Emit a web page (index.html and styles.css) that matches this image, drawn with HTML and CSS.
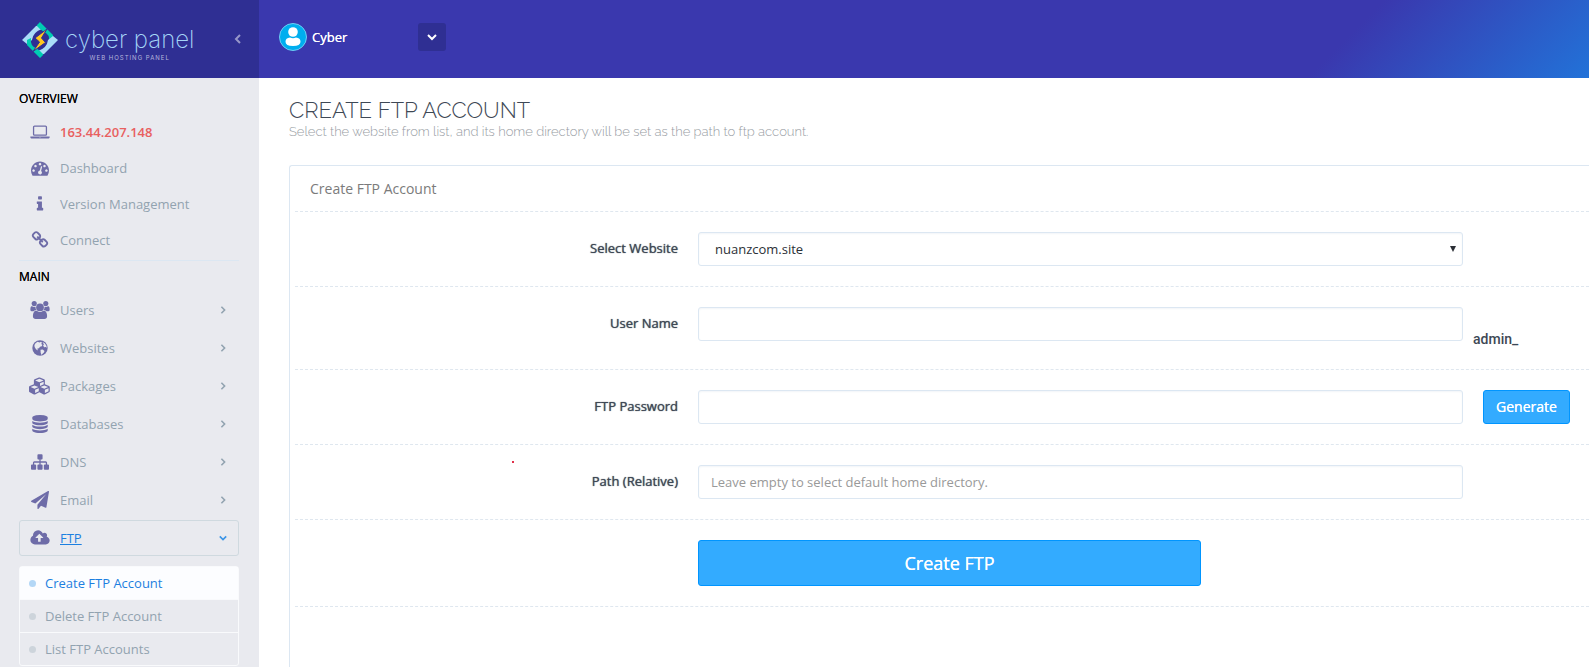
FILE: index.html
```html
<!DOCTYPE html>
<html lang="en">

<head>
    <meta charset="UTF-8">
    <meta name="viewport" content="width=device-width, initial-scale=1.0">
    <title>Create FTP Account - CyberPanel</title>
    <link rel="stylesheet" href="styles.css">
</head>

<body>
    <aside class="sidebar">
        <div class="brand">
            <a class="logo" href="#">
                <svg class="logo-mark" viewBox="0 0 36 36">
                    <path fill="#aadcf8" d="M0 18L14 4h4l2 3q-9 3-10 11l-5 4z" />
                    <path fill="#00cdb3" d="M14.500 3.500L18 0l13 13v5l-4 2q1-8-5-10l-4-3z" />
                    <path fill="#aadcf8" d="M36 18L22 32h-4l-2-3q9-3 10-11l5-4z" />
                    <path fill="#00cdb3" d="M21.500 32.500L18 36 5 23v-5l4-2q-1 8 5 10l4 3z" />
                    <path fill="#ffc81e" stroke="#2f2f93" stroke-width="1" d="M25 7L13 16l4.500 4L11 29.500 23.500 20.500l-4-4.500z" />
                </svg>
                <span class="logo-text">
                    <span class="logo-name">cyber panel</span>
                    <span class="logo-sub">WEB HOSTING PANEL</span>
                </span>
            </a>
            <button class="collapse" type="button" aria-label="Collapse menu">
                <svg viewBox="0 0 8 12"><path d="M6 2L2 6l4 4" /></svg>
            </button>
        </div>

        <nav class="menu">
            <h2 class="menu-title">OVERVIEW</h2>
            <ul class="menu-list overview">
                <li><a class="menu-link server-ip" href="#">
                    <svg class="icon laptop" viewBox="0 0 1920 1792"><path d="M416 1280q-66 0-113-47t-47-113v-704q0-66 47-113t113-47h1088q66 0 113 47t47 113v704q0 66-47 113t-113 47h-1088zm-32-864v704q0 13 9.5 22.5t22.5 9.5h1088q13 0 22.5-9.5t9.5-22.5v-704q0-13-9.5-22.5t-22.5-9.5h-1088q-13 0-22.5 9.5t-9.5 22.5zm1376 928h160v96q0 40-47 68t-113 28h-1600q-66 0-113-28t-47-68v-96h1760zm-720 96q16 0 16-16t-16-16h-160q-16 0-16 16t16 16h160z" /></svg>
                    <span>163.44.207.148</span></a></li>
                <li><a class="menu-link" href="#">
                    <svg class="icon" viewBox="0 0 1792 1792"><path d="M384 1152q0-53-37.5-90.5t-90.5-37.5-90.5 37.5-37.5 90.5 37.5 90.5 90.5 37.5 90.5-37.5 37.5-90.5zm192-448q0-53-37.5-90.5t-90.5-37.5-90.5 37.5-37.5 90.5 37.5 90.5 90.5 37.5 90.5-37.5 37.5-90.5zm428 481l101-382q6-26-7.5-48.5t-38.5-29.5-48 6.5-30 39.5l-101 382q-60 5-107 43.5t-63 98.5q-20 77 20 146t117 89 146-20 89-117q16-60-6-117t-72-91zm660-33q0-53-37.5-90.5t-90.5-37.5-90.5 37.5-37.5 90.5 37.5 90.5 90.5 37.5 90.5-37.5 37.5-90.5zm-640-640q0-53-37.5-90.5t-90.5-37.5-90.5 37.5-37.5 90.5 37.5 90.5 90.5 37.5 90.5-37.5 37.5-90.5zm448 192q0-53-37.5-90.5t-90.5-37.5-90.5 37.5-37.5 90.5 37.5 90.5 90.5 37.5 90.5-37.5 37.5-90.5zm320 448q0 261-141 483-19 29-54 29h-1402q-35 0-54-29-141-221-141-483 0-182 71-348t191-286 286-191 348-71 348 71 286 191 191 286 71 348z" /></svg>
                    <span>Dashboard</span></a></li>
                <li><a class="menu-link" href="#">
                    <svg class="icon" viewBox="0 0 1792 1792"><path d="M1216 1344v128q0 26-19 45t-45 19h-512q-26 0-45-19t-19-45v-128q0-26 19-45t45-19h64v-384h-64q-26 0-45-19t-19-45v-128q0-26 19-45t45-19h384q26 0 45 19t19 45v576h64q26 0 45 19t19 45zm-128-1152v192q0 26-19 45t-45 19h-256q-26 0-45-19t-19-45v-192q0-26 19-45t45-19h256q26 0 45 19t19 45z" /></svg>
                    <span>Version Management</span></a></li>
                <li><a class="menu-link" href="#">
                    <svg class="icon" viewBox="0 0 1792 1792"><path d="M1520 1216q0-40-28-68l-208-208q-28-28-68-28-42 0-72 32 3 3 19 18.5t21.5 21.5 15 19 13 25.5 3.5 27.5q0 40-28 68t-68 28q-15 0-27.5-3.5t-25.5-13-19-15-21.5-21.5-18.5-19q-33 31-33 73 0 40 28 68l206 207q27 27 68 27 40 0 68-26l147-146q28-28 28-67zm-703-705q0-40-28-68l-206-207q-28-28-68-28-39 0-68 27l-147 146q-28 28-28 67 0 40 28 68l208 208q27 27 68 27 42 0 72-31-3-3-19-18.5t-21.5-21.5-15-19-13-25.5-3.5-27.5q0-40 28-68t68-28q15 0 27.5 3.5t25.5 13 19 15 21.5 21.5 18.5 19q33-31 33-73zm895 705q0 120-85 203l-147 146q-83 83-203 83-121 0-204-85l-206-207q-83-83-83-203 0-123 88-209l-88-88q-86 88-208 88-120 0-204-84l-208-208q-84-84-84-204t85-203l147-146q83-83 203-83 121 0 204 85l206 207q83 83 83 203 0 123-88 209l88 88q86-88 208-88 120 0 204 84l208 208q84 84 84 204z" /></svg>
                    <span>Connect</span></a></li>
            </ul>

            <h2 class="menu-title divided">MAIN</h2>
            <ul class="menu-list main">
                <li><a class="menu-link" href="#">
                    <svg class="icon" viewBox="0 0 1920 1792"><path d="M593 896Q431 901 328 1024H194q-82 0-138-40.5T0 865q0-353 124-353 6 0 43.5 21t97.5 42.5T384 597q67 0 133-23-5 37-5 66 0 138 81 256zM1327 896q162 5 265 128h134q82 0 138-40.5T1920 865q0-353-124-353-6 0-43.5 21t-97.5 42.5T1536 597q-67 0-133-23 5 37 5 66 0 138-81 256zM1664 1533q0 120-73 189.5t-194 69.5h-874q-121 0-194-69.5t-73-189.5q0-53 3.5-103.5t14-109 26.5-108.5 43-97.5 62-81 85.5-53.5 111.5-20q10 0 43 21.5t73 48 107 48 135 21.5 135-21.5 107-48 73-48 43-21.5q61 0 111.5 20t85.5 53.5 62 81 43 97.5 26.5 108.5 14 109 3.5 103.5z" /><circle cx="384" cy="256" r="256" /><circle cx="1536" cy="256" r="256" /><circle cx="960" cy="640" r="384" /></svg>
                    <span>Users</span><svg class="arrow" viewBox="0 0 8 10"><path d="M2 1l4 4-4 4" /></svg></a></li>
                <li><a class="menu-link" href="#">
                    <svg class="icon" viewBox="0 0 18 18"><circle cx="9" cy="9" r="7.700" /><path class="land" d="M4.500 4.200l2-1.400 2 .6 1.500-.6 1 1-.8 1.200 1.200.8-.6 1.400-1.800.6-1 1.400-1.600.4.4 1.800-1.800-1.200-1.400-2.200-.2-2zM11.500 3l2.200 1.200 1.600 2.200.6 2.400-1.200-.8-1.600.2-1-1.600.8-1.200zM9.500 10.800l2.200-.2 1.800 1.400-.6 1.600-1.600 1.400-.8 1-.8-2.200z" /></svg>
                    <span>Websites</span><svg class="arrow" viewBox="0 0 8 10"><path d="M2 1l4 4-4 4" /></svg></a></li>
                <li><a class="menu-link" href="#">
                    <svg class="icon" viewBox="0 0 2304 1792"><path d="M640 1632l384-192v-314l-384 164v342zm-64-454l404-173-404-173-404 173zm1088 454l384-192v-314l-384 164v342zm-64-454l404-173-404-173-404 173zm-448-293l384-165v-266l-384 164v267zm-64-379l441-189-441-189-441 189zm1088 518v416q0 36-19 67t-52 47l-448 224q-25 14-57 14t-57-14l-448-224q-4-2-7-4-2 2-7 4l-448 224q-25 14-57 14t-57-14l-448-224q-33-16-52-47t-19-67v-416q0-38 21.5-70t56.5-48l434-186v-400q0-38 21.5-70t56.5-48l448-192q23-10 50-10t50 10l448 192q35 16 56.5 48t21.5 70v400l434 186q36 16 57 48t21 70z" /></svg>
                    <span>Packages</span><svg class="arrow" viewBox="0 0 8 10"><path d="M2 1l4 4-4 4" /></svg></a></li>
                <li><a class="menu-link" href="#">
                    <svg class="icon" viewBox="0 0 1792 1792"><path d="M896 768q237 0 443-43t325-127v170q0 69-103 128t-280 93.5-385 34.5-385-34.5-280-93.5-103-128v-170q119 84 325 127t443 43zm0 768q237 0 443-43t325-127v170q0 69-103 128t-280 93.5-385 34.5-385-34.5-280-93.5-103-128v-170q119 84 325 127t443 43zm0-384q237 0 443-43t325-127v170q0 69-103 128t-280 93.5-385 34.5-385-34.5-280-93.5-103-128v-170q119 84 325 127t443 43zm0-1152q208 0 385 34.5t280 93.5 103 128v128q0 69-103 128t-280 93.5-385 34.5-385-34.5-280-93.5-103-128v-128q0-69 103-128t280-93.5 385-34.5z" /></svg>
                    <span>Databases</span><svg class="arrow" viewBox="0 0 8 10"><path d="M2 1l4 4-4 4" /></svg></a></li>
                <li><a class="menu-link" href="#">
                    <svg class="icon" viewBox="0 0 1792 1792"><path d="M1792 1248v320q0 40-28 68t-68 28h-320q-40 0-68-28t-28-68v-320q0-40 28-68t68-28h96v-192h-512v192h96q40 0 68 28t28 68v320q0 40-28 68t-68 28h-320q-40 0-68-28t-28-68v-320q0-40 28-68t68-28h96v-192h-512v192h96q40 0 68 28t28 68v320q0 40-28 68t-68 28h-320q-40 0-68-28t-28-68v-320q0-40 28-68t68-28h96v-192q0-52 38-90t90-38h512v-192h-96q-40 0-68-28t-28-68v-320q0-40 28-68t68-28h320q40 0 68 28t28 68v320q0 40-28 68t-68 28h-96v192h512q52 0 90 38t38 90v192h96q40 0 68 28t28 68z" /></svg>
                    <span>DNS</span><svg class="arrow" viewBox="0 0 8 10"><path d="M2 1l4 4-4 4" /></svg></a></li>
                <li><a class="menu-link" href="#">
                    <svg class="icon" viewBox="0 0 1792 1792"><path d="M1764 11q33 24 27 64l-256 1536q-5 29-32 45-14 8-31 8-11 0-24-5l-453-185-242 295q-18 23-49 23-13 0-22-4-19-7-30.5-23.5t-11.5-36.5v-349l864-1059-1069 925-395-162q-37-14-40-55-2-40 32-59l1664-960q15-9 32-9 20 0 36 11z" /></svg>
                    <span>Email</span><svg class="arrow" viewBox="0 0 8 10"><path d="M2 1l4 4-4 4" /></svg></a></li>
                <li><a class="menu-link open" href="#">
                    <svg class="icon" viewBox="0 0 1920 1792"><path d="M1280 864q0-14-9-23l-352-352q-9-9-23-9t-23 9l-351 351q-10 12-10 24 0 14 9 23t23 9h224v352q0 13 9.500 22.500t22.500 9.500h192q13 0 22.500-9.500t9.500-22.500v-352h224q13 0 22.500-9.500t9.500-22.500zm640 288q0 159-112.500 271.500t-271.500 112.500h-1088q-185 0-316.500-131.500t-131.500-316.500q0-130 70-240t188-165q-2-30-2-43 0-212 150-362t362-150q156 0 285.500 87t188.500 231q71-62 166-62 106 0 181 75t75 181q0 76-41 138 130 31 213.500 135.500t83.500 238.500z" /></svg>
                    <span>FTP</span><svg class="arrow" viewBox="0 0 10 8"><path d="M1 2l4 4 4-4" /></svg></a>
                    <ul class="submenu">
                        <li><a class="active" href="#">Create FTP Account</a></li>
                        <li><a href="#">Delete FTP Account</a></li>
                        <li><a href="#">List FTP Accounts</a></li>
                    </ul>
                </li>
            </ul>
        </nav>
    </aside>

    <div class="page">
        <header class="topbar">
            <svg class="avatar" viewBox="0 0 28 28">
                <circle cx="14" cy="14" r="13.500" fill="#00aeef" stroke="#6fcdf3" />
                <circle cx="14" cy="9" r="4.800" fill="#fff" />
                <path fill="#fff" d="M11 14.500q3 1.600 6 0 4.500.5 4.500 4.300 0 4.200-7.500 4.200t-7.500-4.200q0-3.800 4.500-4.300z" />
            </svg>
            <span class="user-name">Cyber</span>
            <button class="user-menu" type="button" aria-label="Account menu">
                <svg viewBox="0 0 12 8"><path d="M2 2l4 4 4-4" /></svg>
            </button>
        </header>

        <main class="content">
            <h1>CREATE FTP ACCOUNT</h1>
            <p class="intro">Select the website from list, and its home directory will be set as the path to ftp account.</p>

            <section class="panel">
                <h3 class="panel-title">Create FTP Account</h3>
                <form class="ftp-form">
                    <div class="row">
                        <label for="website">Select Website</label>
                        <div class="select-wrap">
                            <select class="control" id="website">
                                <option>nuanzcom.site</option>
                            </select>
                        </div>
                    </div>
                    <div class="row tall">
                        <label for="username">User Name</label>
                        <input class="control" type="text" id="username">
                        <span class="prefix">admin_</span>
                    </div>
                    <div class="row">
                        <label for="password">FTP Password</label>
                        <input class="control" type="password" id="password">
                        <div class="side"><button class="btn" type="button">Generate</button></div>
                    </div>
                    <div class="row marked">
                        <label for="path">Path (Relative)</label>
                        <input class="control" type="text" id="path" placeholder="Leave empty to select default home directory.">
                    </div>
                    <div class="row">
                        <button class="btn btn-large" type="button">Create FTP</button>
                    </div>
                </form>
            </section>
        </main>
    </div>
</body>

</html>
```
FILE: styles.css
```css
* {
    box-sizing: border-box;
}

body {
    display: flex;
    height: 100vh;
    margin: 0;
    overflow: hidden;
    font-family: "Open Sans", sans-serif;
    font-size: 13px;
    color: #3e4855;
    background: #fff;
}

ul {
    margin: 0;
    padding: 0;
    list-style: none;
}

a {
    text-decoration: none;
}

button {
    cursor: pointer;
}

/* Sidebar */
.sidebar {
    flex: 0 0 259px;
    background: #e9eaef;
}

.brand {
    display: flex;
    align-items: center;
    justify-content: space-between;
    height: 78px;
    padding: 0 16px 0 22px;
    background: #2f2f93;
}

.logo {
    display: flex;
    align-items: center;
    gap: 7px;
    padding-top: 2px;
}

.logo-mark {
    width: 36px;
    height: 36px;
}

.logo-text {
    display: flex;
    flex-direction: column;
    align-items: center;
    padding-top: 7px;
}

.logo-name {
    font-family: Inter, sans-serif;
    font-size: 24px;
    font-weight: 200;
    line-height: 28px;
    color: #a5d6f7;
}

.logo-sub {
    font-family: Inter, sans-serif;
    font-size: 6px;
    letter-spacing: 1px;
    line-height: 8px;
    color: #b5b5dc;
}

.collapse {
    padding: 0;
    border: 0;
    background: none;
}

.collapse svg {
    display: block;
    width: 10px;
    height: 12px;
    fill: none;
    stroke: #9797c9;
    stroke-width: 2;
}

.menu {
    padding: 12px 20px 0 19px;
}

.menu-title {
    margin: 0;
    font-size: 12px;
    font-weight: 500;
    line-height: 18px;
    color: #000;
    text-shadow: 0 0 0 #000;
}

.divided {
    padding-top: 7px;
    border-top: 1px solid #dce7f2;
}

.menu-link {
    display: flex;
    align-items: center;
    gap: 9px;
    height: 36px;
    padding: 0 11px 0 9px;
    border: 1px solid transparent;
    border-radius: 3px;
    color: #92a3b0;
}

.overview {
    padding: 6px 0 2px;
}

.main {
    padding-top: 6px;
}

.main .menu-link {
    margin-bottom: 2px;
}

.server-ip {
    font-weight: 600;
    color: #e8605f;
}

.icon {
    width: 22px;
    height: 18px;
    fill: #6e6ca8;
}

.land {
    fill: #e9eaef;
}

.arrow {
    width: 8px;
    height: 8px;
    margin-left: auto;
    fill: none;
    stroke: #92a3b0;
    stroke-width: 2;
}

.main .open {
    margin-bottom: 10px;
    border-color: #cfd9df;
    color: #1c7fe0;
}

.open span {
    text-decoration: underline;
}

.open .arrow {
    stroke: #3a94e6;
}

.submenu {
    border: 1px solid #f9fafc;
    border-radius: 3px;
}

.submenu li + li {
    border-top: 1px solid #f9fafc;
}

.submenu a {
    display: flex;
    align-items: center;
    gap: 9px;
    height: 32px;
    padding-left: 9px;
    color: #92a3b0;
}

.submenu a::before {
    content: "";
    width: 7px;
    height: 7px;
    border-radius: 50%;
    background: #cdd4db;
}

.submenu .active {
    color: #1c7fe0;
    background: #fcfdff;
}

.submenu .active::before {
    background: #b3d7f6;
}

/* Header */
.page {
    flex: 1;
    min-width: 0;
}

.topbar {
    display: flex;
    align-items: center;
    height: 78px;
    padding: 0 20px 4px;
    background: linear-gradient(135deg, #3a38ae 0%, #3a38ae 80%, #2272d8 100%);
}

.avatar {
    width: 28px;
    height: 28px;
}

.user-name {
    width: 106px;
    margin-left: 5px;
    font-weight: 500;
    color: #fff;
    text-shadow: 0 0 0 #fff;
}

.user-menu {
    display: flex;
    align-items: center;
    justify-content: center;
    width: 28px;
    height: 28px;
    padding: 0;
    border: 0;
    border-radius: 3px;
    background: #2f2f93;
}

.user-menu svg {
    width: 12px;
    height: 8px;
    fill: none;
    stroke: #fff;
    stroke-width: 2;
}

/* Content */
.content {
    padding: 20px 0 0 30px;
}

h1 {
    margin: 0;
    font-family: Raleway, Lato, sans-serif;
    font-size: 22px;
    font-weight: 300;
    line-height: 24px;
}

.intro {
    margin: 0 0 23px;
    font-family: Raleway, Lato, sans-serif;
    font-size: 13px;
    font-weight: 300;
    line-height: 20px;
    color: #979ca3;
}

.panel {
    min-height: 520px;
    padding-left: 5px;
    border: 1px solid #dce7f2;
    border-right: 0;
    border-radius: 3px 0 0 0;
}

.panel-title {
    margin: 0;
    padding: 12px 15px;
    font-size: 14px;
    font-weight: 400;
    line-height: 21px;
    color: #7b7b7b;
}

.row {
    display: flex;
    padding: 20px 0;
    border-top: 1px dashed #dfe7ef;
}

.row:last-child {
    border-bottom: 1px dashed #dfe7ef;
}

.tall {
    padding-bottom: 28px;
}

/* small red dot left of the path label */
.marked {
    position: relative;
}

.marked::before {
    content: "";
    position: absolute;
    top: 16px;
    left: 217px;
    width: 2px;
    height: 2px;
    background: #e0304a;
}

.row label {
    width: 383px;
    margin-right: 20px;
    font-weight: 500;
    line-height: 32px;
    text-align: right;
    text-shadow: 0 0 1px #3e4855;
}

.select-wrap {
    position: relative;
    width: 765px;
}

.select-wrap::after {
    content: "";
    position: absolute;
    top: 14px;
    right: 7px;
    border: 3px solid transparent;
    border-top: 6px solid #2b2f36;
    border-bottom: 0;
}

.control {
    width: 765px;
    height: 34px;
    padding: 0 12px;
    border: 1px solid #dce7f2;
    border-radius: 3px;
    font-family: inherit;
    font-size: 13px;
    color: #2b2f36;
    background: #fff;
    box-shadow: inset 0 1px 2px #f2f5f8;
}

select.control {
    padding-left: 16px;
    appearance: none;
}

.control::placeholder {
    color: #999;
}

.prefix {
    padding-top: 23px;
    margin-left: 10px;
    margin-bottom: -8px;
    font-family: Roboto, sans-serif;
    font-size: 14px;
    font-weight: 500;
    line-height: 18px;
}

.side {
    margin-left: 20px;
}

.btn {
    height: 34px;
    padding: 0 12px 2px;
    border: 1px solid #0095ff;
    border-radius: 3px;
    font-family: inherit;
    font-size: 14px;
    color: #fff;
    background: #33abff;
    text-shadow: 0 0 0 #fff;
}

.btn-large {
    width: 503px;
    height: 46px;
    margin-left: 403px;
    padding: 0 12px;
    font-size: 18px;
}
```
